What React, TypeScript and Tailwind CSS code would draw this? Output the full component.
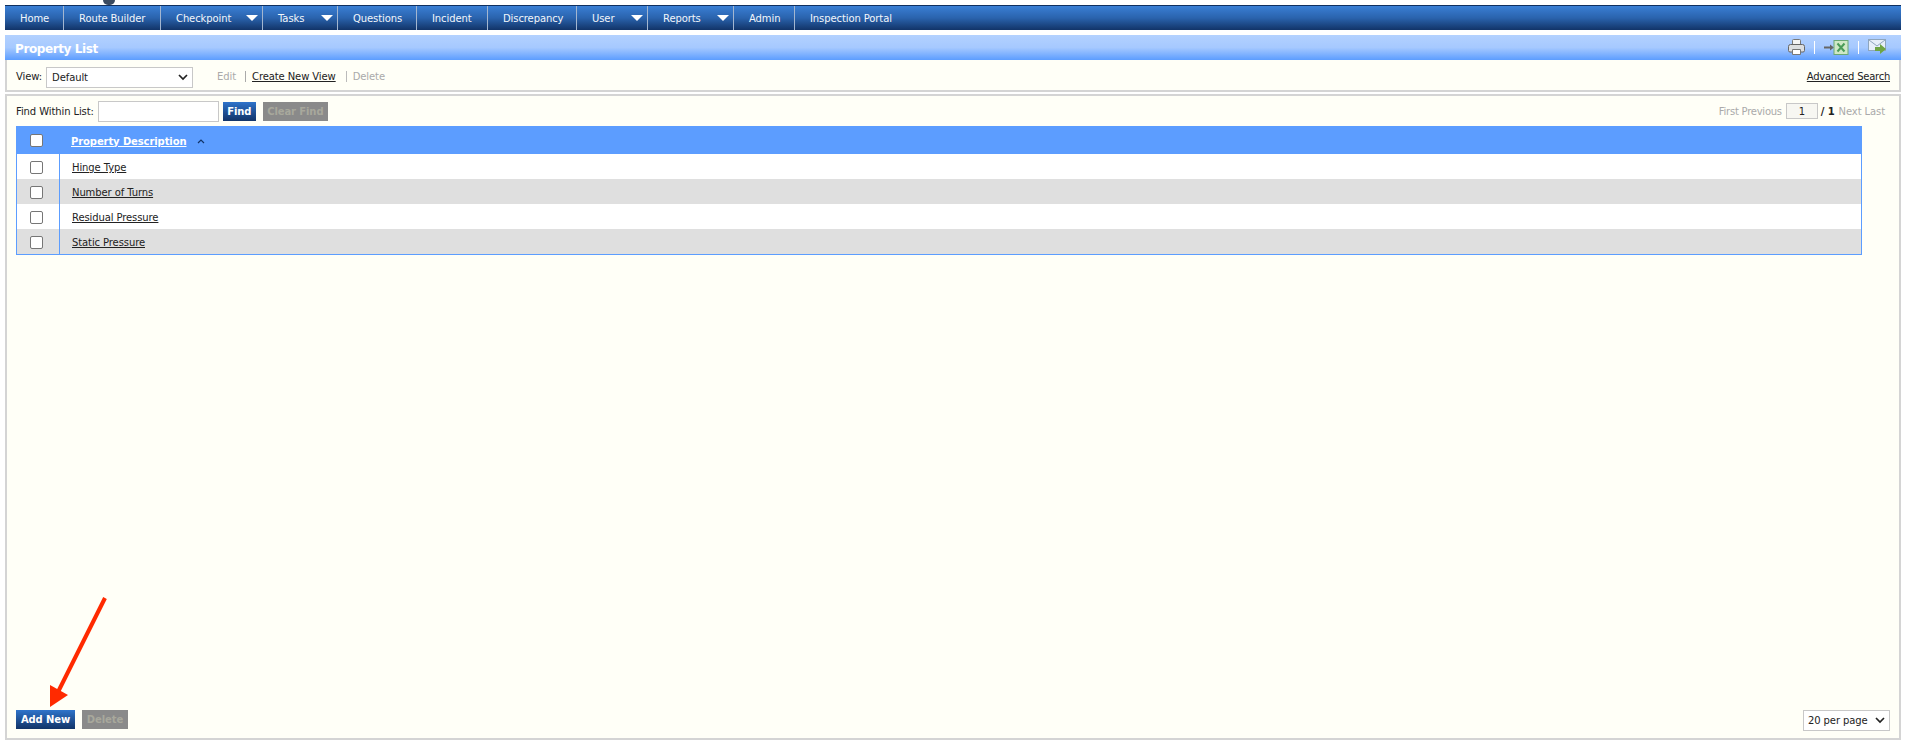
const navItems = [
  { label: "Home", width: "w-[59px]" },
  { label: "Route Builder", width: "w-[97px]" },
  { label: "Checkpoint", width: "w-[102px]", menu: true },
  { label: "Tasks", width: "w-[75px]", menu: true },
  { label: "Questions", width: "w-[79px]" },
  { label: "Incident", width: "w-[71px]" },
  { label: "Discrepancy", width: "w-[89px]" },
  { label: "User", width: "w-[71px]", menu: true },
  { label: "Reports", width: "w-[86px]", menu: true },
  { label: "Admin", width: "w-[61px]" },
];

const properties = ["Hinge Type", "Number of Turns", "Residual Pressure", "Static Pressure"];

function PrinterIcon() {
  return (
    <svg width="17" height="17" viewBox="0 0 17 17">
      <path d="M4.500 1.500q0-1 1-1h6q1 0 1 1v5h-8z" fill="#f4f4f4" stroke="#777" />
      <path d="M0.500 7.500q0-2 2-2h12q2 0 2 2v4q0 1.500-1.500 1.500h-13q-1.500 0-1.500-1.500z" fill="#dcdee0" stroke="#666" />
      <path d="M4.500 10.500h8v5h-8z" fill="#fff" stroke="#777" />
    </svg>
  );
}

function ExcelIcon() {
  return (
    <svg width="25" height="15" viewBox="0 0 25 15">
      <path d="M0 6.500h6V4.500l4 3-4 3v-2H0z" fill="#666" />
      <rect x="10" y="0.500" width="14" height="14" fill="#cfe8c6" stroke="#6aa874" />
      <path d="M13.500 3.500l7 8M20.500 3.500l-7 8" stroke="#4a9c58" strokeWidth="2" />
    </svg>
  );
}

function MailIcon() {
  return (
    <svg width="19" height="17" viewBox="0 0 19 17">
      <rect x="0.500" y="0.500" width="17" height="11" fill="#e6eef8" stroke="#8ea5bd" />
      <path d="M1 1l8 6 8-6" fill="none" stroke="#8ea5bd" />
      <path d="M7 8h5V5l6 5-6 5v-3H7z" fill="#6fa544" />
    </svg>
  );
}

function AnnotationArrow() {
  return (
    <svg className="absolute left-[40px] top-[590px]" width="80" height="130" viewBox="0 0 80 130">
      <path d="M65 8L18 102" stroke="#ff2a00" strokeWidth="4" fill="none" />
      <path d="M10 117L10 95L28 105z" fill="#ff2a00" />
    </svg>
  );
}

export default function App() {
  return (
    <div className="relative flex h-[745px] flex-col overflow-hidden bg-white pl-[5px] pr-[9px] pt-[5px] pb-[5px] font-['DejaVu_Sans',sans-serif] text-[10px] tracking-[-0.1px] text-[#222]">
      <div className="absolute left-[103px] top-0 h-[5px] w-[12px] rounded-b-full bg-[#3a4a60]" />

      <nav className="flex h-[25px] shrink-0 border-t border-[#10305f] bg-gradient-to-b from-[#3a7fd5] via-[#2a63ad] to-[#123468] text-[#f2f6fb]">
        {navItems.map((item) => (
          <div className={`relative flex items-center border-r border-[#a3b6d0] pl-[15px] ${item.width}`} key={item.label}>
            {item.label}
            {item.menu ? (
              <span className="absolute right-[4px] top-[9px] h-0 w-0 border-x-[6px] border-t-[6px] border-x-transparent border-t-white" />
            ) : null}
          </div>
        ))}
        <div className="flex items-center pl-[15px]">Inspection Portal</div>
      </nav>

      <div className="mt-[5px] flex h-[25px] shrink-0 items-center justify-between bg-gradient-to-b from-[#b3d1ff] via-[#a6c9ff] to-[#5c9dff] pl-[10px] pr-[14px]">
        <h1 className="pt-[2px] text-[12px] font-bold tracking-[-0.4px] text-white">Property List</h1>
        <div className="flex items-center">
          <PrinterIcon />
          <span className="mx-[9px] h-[13px] w-px bg-white" />
          <ExcelIcon />
          <span className="mx-[9px] h-[13px] w-px bg-white" />
          <MailIcon />
        </div>
      </div>

      <div className="flex h-[32px] shrink-0 items-center border-x-2 border-b-2 border-[#d4d4d4] bg-[#fffff7] pl-[9px] pr-[9px] pt-[3px]">
        <span>View:</span>
        <div className="ml-[4px] mt-[2px] flex h-[21px] w-[147px] items-center justify-between border border-[#c8c8c8] bg-white pl-[5px] pr-[4px] text-[#222]">
          Default
          <svg width="10" height="7" viewBox="0 0 10 7">
            <path d="M1 1l4 4 4-4" fill="none" stroke="#222" strokeWidth="1.700" />
          </svg>
        </div>
        <span className="ml-[24px] text-[#aaa]">Edit</span>
        <span className="ml-[9px] h-[11px] w-px bg-[#aaa]" />
        <a className="ml-[6px] text-[#222] underline" href="#">Create New View</a>
        <span className="ml-[10px] h-[11px] w-px bg-[#bbb]" />
        <span className="ml-[6px] text-[#aaa]">Delete</span>
        <a className="ml-auto tracking-[-0.25px] text-[#222] underline" href="#">Advanced Search</a>
      </div>

      <main className="mt-[2px] flex min-h-0 flex-1 flex-col border-2 border-[#d4d4d4] bg-[#fffff7] pl-[9px] pr-[9px] pb-[7px]">
        <div className="flex h-[30px] shrink-0 items-center justify-between">
          <div className="flex items-center">
            <span>Find Within List:</span>
            <div className="ml-[4px] h-[21px] w-[121px] border border-[#c8c8c8] bg-white" />
            <button className="ml-[4px] flex h-[19px] w-[33px] items-center justify-center bg-gradient-to-b from-[#2f74cb] to-[#123468] font-bold text-white">
              Find
            </button>
            <button className="ml-[7px] flex h-[19px] w-[65px] items-center justify-center bg-[#8a8a8a] font-bold text-[#a8a89c]">
              Clear Find
            </button>
          </div>
          <div className="flex items-center pr-[5px] text-[#aaa]">
            <span className="tracking-[-0.25px]">First Previous</span>
            <div className="ml-[4px] flex h-[16px] w-[32px] items-center justify-center border border-[#c8c8c8] bg-[#f7f7f2] text-[#222]">1</div>
            <span className="ml-[3px] font-bold text-[#222]">/ 1</span>
            <span className="ml-[4px]">Next Last</span>
          </div>
        </div>

        <div className="w-[1846px] shrink-0 border-x border-b border-[#5c9dff]">
          <div className="flex h-[28px] items-center bg-[#5c9dff]">
            <div className="flex w-[42px] pl-[13px]">
              <input className="h-[13px] w-[13px] appearance-none rounded-[2px] border border-[#767676] bg-white" type="checkbox" />
            </div>
            <a className="ml-[12px] mt-[2px] font-bold text-white underline" href="#">Property Description</a>
            <svg className="ml-[11px] mt-[2px]" width="8" height="5" viewBox="0 0 8 5">
              <path d="M1 4l3-3 3 3" fill="none" stroke="#123468" strokeWidth="1.200" />
            </svg>
          </div>
          {properties.map((name, index) => (
            <div className={`flex h-[25px] items-center ${index % 2 === 1 ? "bg-[#dfdfdf]" : "bg-white"}`} key={name}>
              <div className="flex h-full w-[43px] items-center border-r border-[#5c9dff] pl-[13px] pt-[2px]">
                <input className="h-[13px] w-[13px] appearance-none rounded-[2px] border border-[#767676] bg-white" type="checkbox" />
              </div>
              <a className="ml-[12px] pt-[2px] text-[#222] underline" href="#">{name}</a>
            </div>
          ))}
        </div>

        <div className="mt-auto flex items-start justify-between">
          <div className="flex items-center">
            <button className="flex h-[19px] w-[59px] items-center justify-center bg-gradient-to-b from-[#2f74cb] to-[#123468] font-bold text-white">
              Add New
            </button>
            <button className="ml-[7px] flex h-[19px] w-[46px] items-center justify-center bg-[#8a8a8a] font-bold text-[#a8a89c]">
              Delete
            </button>
          </div>
          <div className="flex h-[21px] w-[87px] items-center justify-between border border-[#c8c8c8] bg-white pl-[4px] pr-[4px]">
            20 per page
            <svg width="10" height="7" viewBox="0 0 10 7">
              <path d="M1 1l4 4 4-4" fill="none" stroke="#222" strokeWidth="1.700" />
            </svg>
          </div>
        </div>
      </main>

      <AnnotationArrow />
    </div>
  );
}
